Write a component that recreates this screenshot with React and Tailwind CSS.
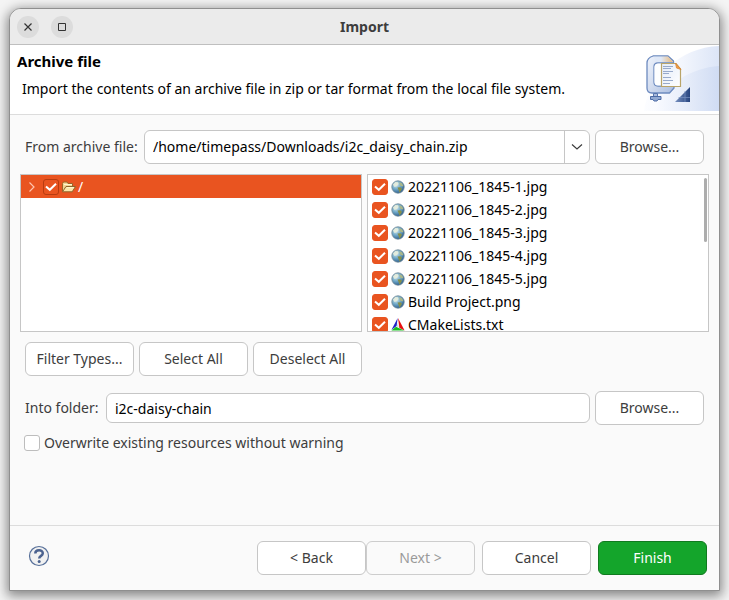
import React, { useState } from "react";

const buttonBase =
  "h-[34px] w-[109px] shrink-0 rounded-md border text-sm leading-5 whitespace-nowrap";

function Button({ children, className = "border-[#c6c6c6] bg-white text-[#3d3d3d]", ...rest }) {
  return (
    <button type="button" className={`${buttonBase} ${className}`} {...rest}>
      {children}
    </button>
  );
}

function CheckBox({ id, label, defaultChecked = false, selected = false }) {
  const [checked, setChecked] = useState(defaultChecked);
  const look = !checked
    ? "border-[#bdbdbd] bg-white"
    : selected
      ? "border-[#b83c10] bg-[#e95420]"
      : "border-[#e95420] bg-[#e95420]";
  return (
    <span className="relative block size-4 shrink-0">
      <input
        id={id}
        type="checkbox"
        aria-label={label}
        checked={checked}
        onChange={(e) => setChecked(e.target.checked)}
        className={`block size-4 appearance-none rounded-[3px] border ${look}`}
      />
      {checked && (
        <svg viewBox="0 0 16 16" className="pointer-events-none absolute inset-0 size-4" fill="none" stroke="#fff" strokeWidth="2">
          <path d="M3 7.4 6.8 10.8 13 4.7" />
        </svg>
      )}
    </span>
  );
}

function GlobeIcon() {
  return (
    <svg viewBox="0 0 14 14" className="size-[14px] shrink-0">
      <defs>
        <radialGradient id="sea" cx="0.35" cy="0.3" r="0.75">
          <stop offset="0" stopColor="#d9ebef" />
          <stop offset="0.5" stopColor="#71a9c8" />
          <stop offset="1" stopColor="#285a8c" />
        </radialGradient>
      </defs>
      <circle cx="7" cy="7" r="6.2" fill="url(#sea)" stroke="#6d8794" strokeWidth="0.8" />
      <path d="M2 4.5 4.5 2 7 2.3 7.6 4 5.8 6.3 3.5 7z" fill="#e7eddb" opacity="0.9" />
      <path d="M8.2 2.2 11 3.3 12.4 6 11 6.6 9 5.6z" fill="#a9b78a" />
      <path d="M6.5 7.5 9.5 7.2 11 8.7 9.8 11 8.4 12.4 7.6 10z" fill="#86904b" />
    </svg>
  );
}

function CMakeIcon() {
  return (
    <svg viewBox="0 0 14 14" className="size-[14px] shrink-0">
      <path d="M6.7 0 0.4 12 5.6 8z" fill="#2222c8" />
      <path d="M7 0 13.6 12.6 8.4 10z" fill="#e81010" />
      <path d="M0.4 12.6 5 8.8 13.2 12.6z" fill="#18c020" />
      <path d="M6.8 4.5 7.8 9.4 5.8 8.4z" fill="#d4d4e0" />
    </svg>
  );
}

function FolderIcon() {
  return (
    <svg viewBox="0 0 16 16" className="size-4 shrink-0">
      <path d="M1.5 12.5V4.5L2.5 3H6l1 1.5h4.5V7" fill="#f2d492" stroke="#9c6428" strokeWidth="1" />
      <path d="M1.5 12.8 5 7.5h9.5L11.2 12.8z" fill="#fbe6a9" stroke="#8f642a" strokeWidth="1" strokeLinejoin="round" />
      <path d="M3 5.5h8M6 8.6h7" stroke="#fff6cf" strokeWidth="1" />
    </svg>
  );
}

function ArchiveBanner() {
  return (
    <svg viewBox="0 0 75 66" className="h-[66px] w-[75px] shrink-0">
      <defs>
        <linearGradient id="sweep" x1="0" x2="1">
          <stop offset="0" stopColor="#fcfdff" />
          <stop offset="0.5" stopColor="#f3f6fd" />
          <stop offset="1" stopColor="#dce5f7" />
        </linearGradient>
        <linearGradient id="sweepLow" x1="0" x2="1">
          <stop offset="0" stopColor="#f8faff" />
          <stop offset="1" stopColor="#ccd9f2" />
        </linearGradient>
        <linearGradient id="steel" x1="0" x2="1" y2="1">
          <stop offset="0" stopColor="#eef3fc" />
          <stop offset="0.5" stopColor="#d2dcef" />
          <stop offset="1" stopColor="#a9bde0" />
        </linearGradient>
        <linearGradient id="jaw" x1="0" x2="1">
          <stop offset="0.4" stopColor="#dfe8f7" />
          <stop offset="1" stopColor="#e9b878" />
        </linearGradient>
        <linearGradient id="page" x1="0" x2="1" y2="1">
          <stop offset="0" stopColor="#e3ebf8" />
          <stop offset="1" stopColor="#ffffff" />
        </linearGradient>
        <linearGradient id="corner" x1="0" x2="1">
          <stop offset="0" stopColor="#7790bf" />
          <stop offset="1" stopColor="#27457f" />
        </linearGradient>
      </defs>
      <path d="M0 66C4 34 36 2 75 1V66z" fill="url(#sweep)" />
      <path d="M12 66C20 38 48 23 75 21V66z" fill="url(#sweepLow)" opacity="0.75" />
      <path
        d="M9 11H24L29.5 16V18H14Q10 18 10 22V37Q10 41 14 41H30V43L25.5 48H8Q3 48 3 43V18Q3 13 9 11z"
        fill="url(#steel)"
        stroke="#6c8abf"
        strokeWidth="1.3"
        strokeLinejoin="round"
      />
      <path d="M9 11.5H24L29 17H13z" fill="url(#jaw)" />
      <path d="M10.5 22Q10.5 18.5 14 18.5H18V40.5H14Q10.5 40.5 10.5 37z" fill="#fdfeff" />
      <path d="M9.5 48.5h4v4h-4z" fill="#a9bbdc" stroke="#5876ae" />
      <path d="M6.5 51.5h10.5v3h-3l-1 1.5h-3l-1-1.5H6.5z" fill="#91a9d2" stroke="#4c6ba5" />
      <path d="M17.5 18.5H32L36.5 24V41.5H17.5z" fill="url(#page)" stroke="#b9a469" strokeWidth="1.2" />
      <path d="M31.5 18 37 24.5 32.5 23z" fill="#ef9c45" stroke="#d98535" strokeWidth="0.8" />
      <path d="M19 21.5h10M19 23.5h8M19 26.5h10M19 28.5h6M19 32.5h8M19 35.5h10M19 38.5h7" stroke="#98aacb" strokeWidth="1" />
      <path d="M46 42V57H31z" fill="url(#corner)" />
      <path d="M41 46v11M34.5 52.5H46" stroke="#7892c2" strokeWidth="0.7" />
    </svg>
  );
}

const files = [
  "20221106_1845-1.jpg",
  "20221106_1845-2.jpg",
  "20221106_1845-3.jpg",
  "20221106_1845-4.jpg",
  "20221106_1845-5.jpg",
  "Build Project.png",
  "CMakeLists.txt",
];

const titleButton =
  "flex size-[22px] items-center justify-center rounded-full bg-[#dcdcdc] text-[#333]";

export default function App() {
  return (
    <div className="flex min-h-screen flex-col bg-[#f4f4f4] pt-2 pr-[9px] pb-[9px] pl-[9px] font-['Noto_Sans',sans-serif] text-sm leading-5 text-[#3d3d3d]">
      <div className="flex flex-1 flex-col overflow-hidden rounded-t-xl border border-[#8f8f8f] bg-[#fafafa] shadow-[0_3px_12px_2px_rgba(0,0,0,0.45)]">
        <header className="grid h-9 shrink-0 grid-cols-[1fr_auto_1fr] items-center border-b border-[#bfbfbf] bg-[#ebebeb] px-[7px]">
          <div className="flex gap-3">
            <button type="button" aria-label="Close" className={titleButton}>
              <svg viewBox="0 0 8 8" className="size-2" stroke="currentColor" strokeWidth="1.2">
                <path d="M0.5 0.5l7 7M7.5 0.5l-7 7" />
              </svg>
            </button>
            <button type="button" aria-label="Maximize" className={titleButton}>
              <svg viewBox="0 0 8 8" className="size-2" fill="none" stroke="currentColor">
                <path d="M0.5 0.5h7v7h-7z" />
              </svg>
            </button>
          </div>
          <h1 className="text-sm leading-5 font-bold">Import</h1>
        </header>

        <section className="flex h-[70px] shrink-0 items-start justify-between border-b border-[#dcdcdc] bg-white pl-[7px] text-black">
          <div className="pt-[6px]">
            <h2 className="text-[15px] leading-5 font-bold">Archive file</h2>
            <p className="mt-2 pl-[5px] whitespace-nowrap">
              Import the contents of an archive file in zip or tar format from the local file system.
            </p>
          </div>
          <ArchiveBanner />
        </section>

        <main className="flex flex-1 flex-col px-[10px] pt-[15px]">
          <div className="flex items-center gap-[5px] px-[5px]">
            <label htmlFor="archive" className="w-[114px] shrink-0 whitespace-nowrap">
              From archive file:
            </label>
            <div className="relative min-w-0 flex-1">
              <select
                id="archive"
                className="block h-[34px] w-full appearance-none rounded-md border border-[#c6c6c6] bg-white pr-8 pl-2 text-sm leading-5 text-black"
              >
                <option>/home/timepass/Downloads/i2c_daisy_chain.zip</option>
              </select>
              <span className="pointer-events-none absolute inset-y-px right-px flex w-[25px] items-center justify-center border-l border-[#c6c6c6]">
                <svg viewBox="0 0 12 6" className="h-[6px] w-3" fill="none" stroke="#3d3d3d" strokeWidth="1.2">
                  <path d="M1 0.5 6 5 11 0.5" />
                </svg>
              </span>
            </div>
            <Button>Browse...</Button>
          </div>

          <div className="mt-[10px] grid h-[158px] grid-cols-2 gap-[5px]">
            <div className="border border-[#c6c6c6] bg-white">
              <div className="flex h-[23px] items-center bg-[#e95420] pl-[7px] text-white">
                <svg viewBox="0 0 8 12" className="mr-[7px] h-3 w-2" fill="none" stroke="#ffc4ae" strokeWidth="1.2">
                  <path d="M1.5 1.5 6 6 1.5 10.5" />
                </svg>
                <CheckBox label="/" defaultChecked selected />
                <span className="mr-px ml-[2px] flex">
                  <FolderIcon />
                </span>
                <span>/</span>
              </div>
            </div>
            <div className="relative overflow-hidden border border-[#c6c6c6] bg-white text-black">
              <ul>
                {files.map((name, i) => (
                  <li key={name} className="flex h-[23px] items-center pl-1">
                    <CheckBox id={`file-${i}`} defaultChecked />
                    <label htmlFor={`file-${i}`} className="ml-[3px] flex items-center gap-[3px] whitespace-nowrap">
                      {name.endsWith(".txt") ? <CMakeIcon /> : <GlobeIcon />}
                      {name}
                    </label>
                  </li>
                ))}
              </ul>
              <span className="absolute top-[3px] right-px h-16 w-[3px] rounded-full bg-[#adadad]" />
            </div>
          </div>

          <div className="mt-[10px] flex gap-[5px] px-[5px]">
            <Button>Filter Types...</Button>
            <Button>Select All</Button>
            <Button>Deselect All</Button>
          </div>

          <div className="mt-[15px] flex items-center gap-[5px] px-[5px]">
            <label htmlFor="folder" className="w-[76px] shrink-0 whitespace-nowrap">
              Into folder:
            </label>
            <input
              id="folder"
              type="text"
              defaultValue="i2c-daisy-chain"
              className="h-[30px] min-w-0 flex-1 rounded-md border border-[#c6c6c6] bg-white px-2 text-sm leading-5 text-black"
            />
            <Button>Browse...</Button>
          </div>

          <div className="mt-2 flex items-center gap-1 px-1">
            <CheckBox id="overwrite" />
            <label htmlFor="overwrite" className="whitespace-nowrap">
              Overwrite existing resources without warning
            </label>
          </div>
        </main>

        <footer className="flex h-[65px] shrink-0 items-start border-t border-[#dcdcdc] pt-[15px] pr-3 pl-[18px]">
          <button type="button" aria-label="Help" className="mr-auto py-1">
            <svg viewBox="0 0 22 22" className="block size-[22px]">
              <circle cx="11" cy="11" r="9.5" fill="#f1f1f1" stroke="#566f99" strokeWidth="1.2" />
              <path
                d="M7.3 8.5C7.3 4.2 14.8 4.2 14.8 8.3C14.8 11 11.2 10.7 11.2 13.5"
                fill="none"
                stroke="#4b628f"
                strokeWidth="2.5"
              />
              <circle cx="11.2" cy="16.4" r="1.5" fill="#4b628f" />
            </svg>
          </button>
          <div className="flex gap-[7px]">
            <div className="flex">
              <Button>&lt; Back</Button>
              <Button disabled className="border-[#cdcdcd] bg-[#fafafa] text-[#9a9a9a]">
                Next &gt;
              </Button>
            </div>
            <Button>Cancel</Button>
            <Button className="border-[#107a1f] bg-[#14a52b] text-white">Finish</Button>
          </div>
        </footer>
      </div>
    </div>
  );
}
